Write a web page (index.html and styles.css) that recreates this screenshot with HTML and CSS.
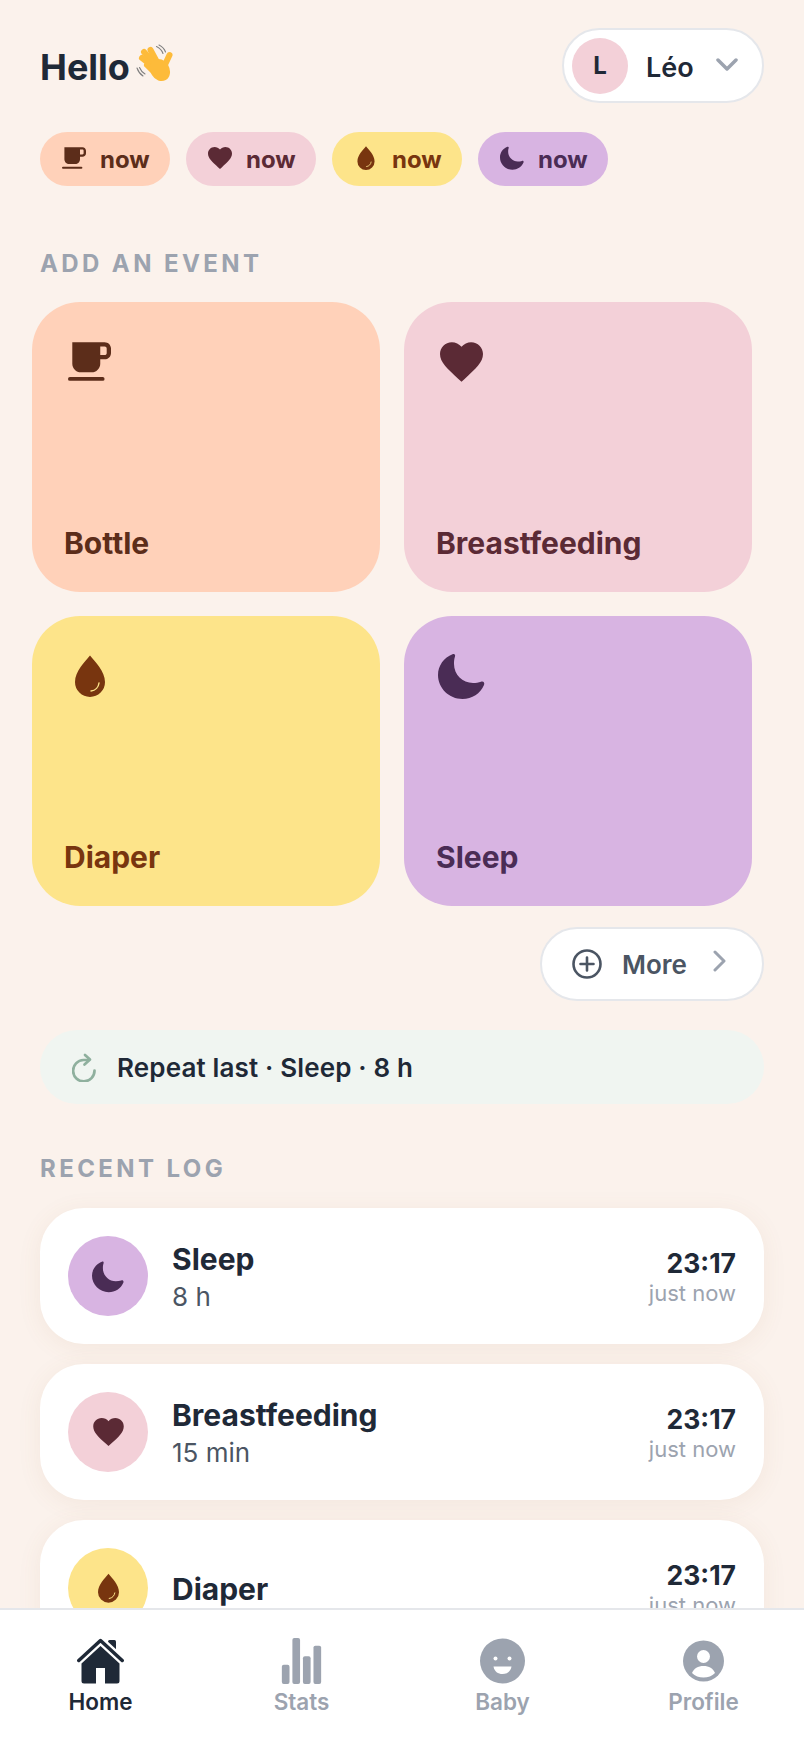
FILE: index.html
```html
<!DOCTYPE html>
<html lang="en">
<head>
  <meta charset="UTF-8" />
  <title>Baby tracker</title>
  <link rel="stylesheet" href="styles.css">
</head>
<body>
  <svg class="sprites" aria-hidden="true">
    <symbol id="i-cup" viewBox="3 3 20 18">
      <path d="M5 3h15c1.700 0 3 1.300 3 3v2c0 1.700-1.300 3-3 3h-2v2c0 2.200-1.800 4-4 4H9c-2.200 0-4-1.800-4-4V3zm13 2v4h2c.6 0 1-.4 1-1V6c0-.6-.4-1-1-1h-2z" fill-rule="evenodd" />
      <rect x="3" y="19.200" width="17" height="1.800" rx=".9" />
    </symbol>
    <symbol id="i-heart" viewBox="2 3 20 18.350">
      <path d="M12 21.350l-1.450-1.320C5.400 15.360 2 12.280 2 8.500 2 5.420 4.420 3 7.500 3c1.740 0 3.410.81 4.500 2.090C13.090 3.810 14.760 3 16.500 3 19.580 3 22 5.420 22 8.500c0 3.780-3.400 6.860-8.550 11.540L12 21.350z" />
    </symbol>
    <symbol id="i-drop" viewBox="0 0 30 42">
      <path d="M15 .5C20 7 30 16 30 27a15 15 0 0 1-30 0C0 16 10 7 15 .5z" />
      <path class="drop-shine" d="M24 28c-.5 4-3.500 7.500-8 8" />
    </symbol>
    <symbol id="i-moon" viewBox="0 0 47 46">
      <path d="M14.500 1.200C16.500.4 17.600 2 17 3.600 16.200 6 16 8 16 11c0 10.500 8.500 19 19 19 3 0 5.500-.4 8-1.200 2.400-.8 4 1.200 3 3.200C42.500 40.500 34 46 24.500 46 11 46 0 35 0 22 0 12.500 6 4.500 14.500 1.200z" />
    </symbol>
  </svg>

  <main class="content">
    <header class="top">
      <h1 class="hello">Hello
        <svg class="wave" viewBox="6 6 38 40">
          <g class="wave-ticks"><path d="M27.500 8.500c3 1.500 5.500 4 6.500 7" /><path d="M30 7c3 1.500 5.500 4 6.500 7" /><path d="M8 30c1 3 3 6 6 8" /><path d="M10.500 29.500c1 2.500 3 5 5.500 6.500" /></g>
          <g class="wave-hand"><path d="M29 26L21.500 12" /><path d="M27 28L15 14" /><path d="M25.500 30L13 20" /><path d="M26 35L18 27" /><path d="M34 31L40.500 17" /></g>
          <ellipse class="wave-palm" cx="31" cy="32" rx="9.500" ry="11.500" transform="rotate(-30 31 32)" />
        </svg>
      </h1>
      <button class="who">
        <span class="avatar">L</span>
        <span class="who-name">Léo</span>
        <svg class="who-caret" viewBox="0 0 22 13"><path d="M2 2l9 9 9-9" /></svg>
      </button>
    </header>

    <div class="chips">
      <span class="chip bottle"><svg class="chip-icon"><use href="#i-cup"/></svg>now</span>
      <span class="chip breast"><svg class="chip-icon"><use href="#i-heart"/></svg>now</span>
      <span class="chip diaper"><svg class="chip-icon"><use href="#i-drop"/></svg>now</span>
      <span class="chip sleep"><svg class="chip-icon"><use href="#i-moon"/></svg>now</span>
    </div>

    <h2 class="section-title">ADD AN EVENT</h2>
    <div class="event-grid">
      <button class="event bottle"><svg class="event-cup"><use href="#i-cup"/></svg><span>Bottle</span></button>
      <button class="event breast"><svg class="event-heart"><use href="#i-heart"/></svg><span>Breastfeeding</span></button>
      <button class="event diaper"><svg class="event-drop"><use href="#i-drop"/></svg><span>Diaper</span></button>
      <button class="event sleep"><svg class="event-moon"><use href="#i-moon"/></svg><span>Sleep</span></button>
    </div>

    <div class="more-row">
      <button class="more">
        <svg class="more-plus" viewBox="0 0 30 30"><circle cx="15" cy="15" r="13.500" /><path d="M15 8.500v13M8.500 15h13" /></svg>
        <span>More</span>
        <svg class="more-caret" viewBox="0 0 13 22"><path d="M2 2l9 9-9 9" /></svg>
      </button>
    </div>

    <button class="repeat">
      <svg class="repeat-icon" viewBox="12 10 25 30"><path d="M34.500 28.500A10.700 10.700 0 1 1 23.500 18H29" /><path d="M25 13l5 4.500-5.500 5" /></svg>
      Repeat last · Sleep · 8 h
    </button>

    <h2 class="section-title log-title">RECENT LOG</h2>
    <ul class="log">
      <li class="log-row">
        <span class="log-icon sleep"><svg class="log-moon"><use href="#i-moon"/></svg></span>
        <div class="log-main"><div class="log-name">Sleep</div><div class="log-sub">8 h</div></div>
        <div class="log-when"><div class="log-time">23:17</div><div class="log-ago">just now</div></div>
      </li>
      <li class="log-row">
        <span class="log-icon breast"><svg class="log-heart"><use href="#i-heart"/></svg></span>
        <div class="log-main"><div class="log-name">Breastfeeding</div><div class="log-sub">15 min</div></div>
        <div class="log-when"><div class="log-time">23:17</div><div class="log-ago">just now</div></div>
      </li>
      <li class="log-row">
        <span class="log-icon diaper"><svg class="log-drop"><use href="#i-drop"/></svg></span>
        <div class="log-main"><div class="log-name">Diaper</div></div>
        <div class="log-when"><div class="log-time">23:17</div><div class="log-ago">just now</div></div>
      </li>
    </ul>
  </main>

  <nav class="tabs">
    <a class="tab active">
      <svg class="tab-icon" width="47" height="46" viewBox="0 0 47 46">
        <rect x="31" y="2" width="8" height="14" rx="1.500" />
        <path class="roof-gap" d="M0 24.500L23.500 3 47 24.500" />
        <path class="roof" d="M1.800 22.500L23.500 2.500 45.200 22.500" />
        <path d="M4.500 25.500L23.500 8l19 17.500V43a2.500 2.500 0 0 1-2.500 2.500H28V30h-9v15.500H7A2.500 2.500 0 0 1 4.500 43z" />
      </svg>
      Home
    </a>
    <a class="tab">
      <svg class="tab-icon" width="41" height="46" viewBox="0 0 41 48">
        <rect x="0" y="28" width="8" height="20" rx="2" />
        <rect x="11" y="0" width="8" height="48" rx="2" />
        <rect x="22" y="19" width="8" height="29" rx="2" />
        <rect x="33" y="8" width="8" height="40" rx="2" />
      </svg>
      Stats
    </a>
    <a class="tab">
      <svg class="tab-icon" width="45" height="46" viewBox="0 0 45 45">
        <path fill-rule="evenodd" d="M22.500 0a22.500 22.500 0 1 1 0 45 22.500 22.500 0 0 1 0-45z" />
        <circle class="cut" cx="15.500" cy="20" r="2" />
        <circle class="cut" cx="29.500" cy="20" r="2" />
        <path class="cut" d="M13.500 28h18c-.8 5-4.500 7.500-9 7.500s-8.200-2.500-9-7.500z" />
      </svg>
      Baby
    </a>
    <a class="tab">
      <svg class="tab-icon" width="41" height="46" viewBox="0 0 41 41">
        <circle cx="20.500" cy="20.500" r="20.500" />
        <circle class="cut" cx="20.500" cy="16" r="6.500" />
        <path class="cut" d="M9 32.500c1.800-4.500 6-7 11.500-7s9.700 2.500 11.500 7c-3 3-7 4.500-11.500 4.500S12 35.500 9 32.500z" />
      </svg>
      Profile
    </a>
  </nav>
</body>
</html>
```

FILE: styles.css
```css
* {
  box-sizing: border-box;
}

html, body {
  height: 100%;
}

body {
  margin: 0;
  display: flex;
  flex-direction: column;
  background: #fbf2ec;
  color: #1f2937;
  font-family: Inter, "Noto Sans", sans-serif;
  overflow: hidden;
}

button {
  font: inherit;
  color: inherit;
  border: none;
  background: none;
  padding: 0;
  text-align: left;
}

.sprites {
  display: none;
}

.content {
  flex: 1;
  min-height: 0;
  overflow: hidden;
  padding: 28px 40px 0;
}

/* colours per event type */
.bottle { background: #ffd1b9; color: #5c2d1a; }
.breast { background: #f3d0d8; color: #5b2a35; }
.diaper { background: #fde48a; color: #78350f; }
.sleep { background: #d8b4e2; color: #4a2c55; }

.drop-shine {
  fill: none;
  stroke: #fde48a;
  stroke-width: 1.400;
  stroke-linecap: round;
}

svg {
  fill: currentColor;
  flex-shrink: 0;
}

/* header */
.top {
  display: flex;
  align-items: center;
  justify-content: space-between;
  height: 75px;
}

.hello {
  margin: 2px 0 0;
  font-size: 36px;
  font-weight: 700;
  display: flex;
  align-items: center;
  gap: 5px;
}

.wave {
  width: 38px;
  height: 40px;
  margin-top: -5px;
}

.wave-ticks {
  fill: none;
  stroke: #7f7f7f;
  stroke-width: 1.100;
  stroke-linecap: round;
}

.wave-hand {
  fill: none;
  stroke: #fdbb3a;
  stroke-width: 6;
  stroke-linecap: round;
}

.wave-palm {
  fill: #fdbb3a;
}

.who {
  width: 202px;
  height: 75px;
  display: flex;
  align-items: center;
  padding: 0 24px 0 8px;
  background: #fff;
  border: 2px solid #e5e7eb;
  border-radius: 38px;
}

.avatar {
  width: 56px;
  height: 56px;
  border-radius: 50%;
  background: #f3d0d8;
  display: flex;
  align-items: center;
  justify-content: center;
  font-size: 24px;
  font-weight: 700;
}

.who-name {
  margin: 3px 0 0 18px;
  font-size: 27px;
  font-weight: 600;
}

.who-caret {
  width: 22px;
  height: 13px;
  margin-left: auto;
  margin-top: -2px;
  fill: none;
  stroke: #9ca3af;
  stroke-width: 3.500;
  stroke-linecap: round;
  stroke-linejoin: round;
}

/* last event chips */
.chips {
  display: flex;
  gap: 16px;
  margin-top: 29px;
}

.chip {
  width: 130px;
  height: 54px;
  border-radius: 27px;
  padding-left: 22px;
  display: flex;
  align-items: center;
  font-size: 24px;
  font-weight: 700;
}

.chip-icon {
  width: 24px;
  height: 24px;
  margin-right: 14px;
  margin-top: -3px;
}

.section-title {
  margin: 63px 0 23px;
  font-size: 24px;
  line-height: 30px;
  font-weight: 700;
  letter-spacing: 3.400px;
  color: #9ca3af;
}

.log-title {
  margin: 50px 0 24px;
}

/* event cards */
.event-grid {
  display: grid;
  grid-template-columns: 348px 348px;
  grid-auto-rows: 290px;
  gap: 24px;
  margin-left: -8px;
}

.event {
  border-radius: 48px;
  padding: 40px 32px 31px;
  display: flex;
  flex-direction: column;
  justify-content: space-between;
  align-items: flex-start;
  font-size: 30px;
  font-weight: 700;
}

.event-cup { width: 43px; height: 39px; margin-left: 4px; }
.event-heart { width: 43px; height: 40px; margin-left: 4px; }
.event-drop { width: 30px; height: 42px; margin-left: 11px; margin-top: -1px; }
.event-moon { width: 47px; height: 46px; margin-left: 2px; margin-top: -3px; }

/* more + repeat */
.more-row {
  display: flex;
  justify-content: flex-end;
  margin-top: 21px;
}

.more {
  width: 224px;
  height: 74px;
  display: flex;
  align-items: center;
  padding-left: 30px;
  background: #fff;
  border: 2px solid #e5e7eb;
  border-radius: 37px;
  color: #4b5563;
  font-size: 26px;
  font-weight: 600;
}

.more-plus {
  width: 30px;
  height: 30px;
  margin-right: 20px;
  fill: none;
  stroke: #4b5563;
  stroke-width: 2.600;
  stroke-linecap: round;
}

.more-caret {
  width: 13px;
  height: 22px;
  margin-left: 26px;
  margin-top: -6px;
  fill: none;
  stroke: #9ca3af;
  stroke-width: 3;
  stroke-linecap: round;
  stroke-linejoin: round;
}

.repeat {
  width: 724px;
  height: 74px;
  margin-top: 29px;
  padding-left: 32px;
  display: flex;
  align-items: center;
  gap: 20px;
  background: #f0f5f1;
  border-radius: 37px;
  font-size: 26px;
  font-weight: 600;
  letter-spacing: 0.15px;
}

.repeat-icon {
  width: 25px;
  height: 30px;
  fill: none;
  stroke: #8fb09e;
  stroke-width: 2.700;
  stroke-linecap: round;
  stroke-linejoin: round;
}

/* recent log */
.log {
  list-style: none;
  margin: 0;
  padding: 0;
  display: flex;
  flex-direction: column;
  gap: 20px;
}

.log-row {
  height: 136px;
  flex-shrink: 0;
  display: flex;
  align-items: center;
  padding: 0 28px;
  background: #fff;
  border-radius: 44px;
  box-shadow: 0 4px 24px rgba(150, 100, 60, 0.08);
}

.log-icon {
  width: 80px;
  height: 80px;
  border-radius: 50%;
  display: flex;
  align-items: center;
  justify-content: center;
  margin-right: 24px;
}

.log-moon { width: 32px; height: 33px; }
.log-heart { width: 31px; height: 28px; }
.log-drop { width: 21px; height: 30px; }

.log-main {
  flex: 1;
  padding-top: 1px;
}

.log-name {
  font-size: 30px;
  line-height: 38px;
  font-weight: 700;
}

.log-sub {
  font-size: 26px;
  line-height: 34px;
  margin-top: 2px;
  color: #4b5563;
}

.log-when {
  text-align: right;
  padding-top: 1px;
}

.log-time {
  font-size: 26.500px;
  line-height: 32px;
  font-weight: 700;
}

.log-ago {
  font-size: 22px;
  line-height: 28px;
  color: #9ca3af;
}

/* bottom tabs */
.tabs {
  height: 140px;
  flex-shrink: 0;
  display: grid;
  grid-template-columns: repeat(4, 1fr);
  padding-top: 28px;
  background: #fff;
  border-top: 2px solid #e5e7eb;
  color: #9ca3af;
}

.tab {
  display: flex;
  flex-direction: column;
  align-items: center;
  font-size: 22.500px;
  font-weight: 600;
  line-height: 36px;
}

.tab.active {
  color: #1f2937;
}

.tab-icon {
  display: block;
}

.roof {
  fill: none;
  stroke: currentColor;
  stroke-width: 3.500;
  stroke-linecap: round;
  stroke-linejoin: round;
}

.roof-gap {
  fill: none;
  stroke: #fff;
  stroke-width: 9;
}

.cut {
  fill: #fff;
}
```
